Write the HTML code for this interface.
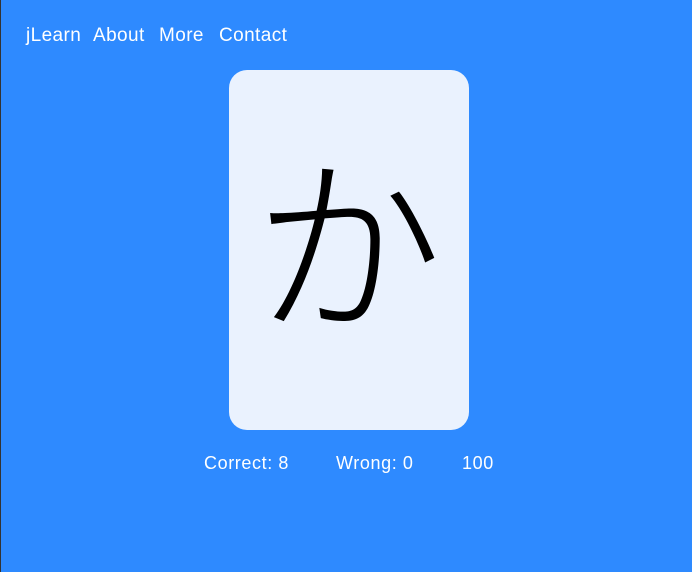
<!DOCTYPE html>
<html><head><meta charset="utf-8"><style>
html,body{margin:0;padding:0;}
body{width:692px;height:572px;background:#2e8aff;position:relative;overflow:hidden;font-family:"Liberation Sans","Noto Sans CJK JP",sans-serif;color:#fff;border-left:1px solid #333;box-sizing:border-box;}
.n{position:absolute;top:25px;font-size:19px;letter-spacing:0.4px;}
.card{position:absolute;left:228px;top:70px;width:240px;height:360px;background:#eaf2fe;border-radius:18px;}
.kana{position:absolute;left:-1px;width:240px;text-align:center;top:70px;font-family:"Noto Sans CJK JP",sans-serif;font-weight:300;font-size:190px;color:#000;line-height:1;}
.stats{position:absolute;top:453px;font-size:18px;letter-spacing:0.6px;}
</style></head><body>
<div class="n" style="left:25px">jLearn</div>
<div class="n" style="left:92px">About</div>
<div class="n" style="left:158px">More</div>
<div class="n" style="left:218px">Contact</div>
<div class="card"><div class="kana">か</div></div>
<div class="stats" style="left:203px">Correct: 8</div>
<div class="stats" style="left:335px">Wrong: 0</div>
<div class="stats" style="left:461px">100</div>
</body></html>
